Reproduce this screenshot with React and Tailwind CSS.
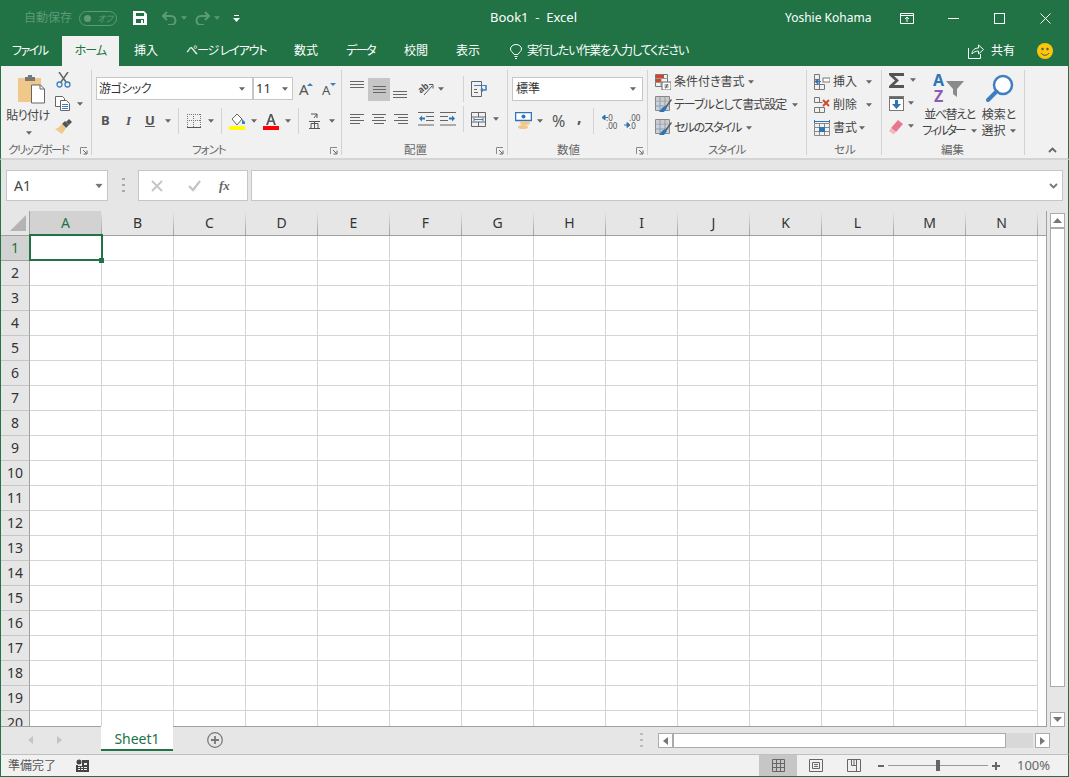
import React from "react";

const Caret = ({ className = "", c = "#666" }) => (
  <svg width="6" height="4" viewBox="0 0 7 4" className={"shrink-0 " + className}><path d="M0 0h7L3.5 4z" fill={c} /></svg>
);
const Sep = ({ className = "" }) => <div className={"w-px h-[26px] bg-[#d2d2d2] shrink-0 " + className} />;
const Launcher = ({ className = "" }) => (
  <svg width="8" height="8" viewBox="0 0 8 8" className={"shrink-0 " + className}>
    <path d="M.5 7V.5H7" fill="none" stroke="#8a8a8a" /><path d="M3 3l3.5 3.5M7 3.5V7H3.5" fill="none" stroke="#666" />
  </svg>
);
const Lines = ({ rows, className = "" }) => (
  <svg width="15" height="14" viewBox="0 0 15 14" className={"shrink-0 " + className}>
    {rows.map(([a, b, y], i) => <rect key={i} x={a} y={y} width={b - a} height="1" fill="#666" />)}
  </svg>
);
const Group = ({ w, label, lx, launcher, children, last }) => (
  <div className={"flex shrink-0 " + w}>
    <div className="flex-1 flex flex-col h-[88px] min-w-0">
      <div className="flex-1 min-h-0">{children}</div>
      <div className="flex items-center h-[14px] mb-[1px] text-[11.5px] text-[#666] leading-none">
        <span className={lx}>{label}</span>
        {launcher ? <Launcher className="ml-auto mr-[3px] mt-[2px]" /> : null}
      </div>
    </div>
    {last ? null : <div className="w-px h-[85px] bg-[#d2d2d2]" />}
  </div>
);

const Paste = () => (
  <svg width="29" height="30" viewBox="0 0 29 30">
    <path d="M1 4h23v24H1z" fill="#efc88a" />
    <path d="M8 3h3V1h4v2h3v4H8z" fill="#777" />
    <path d="M14.500 11h9l4 4v14h-13z" fill="#fff" stroke="#666" />
    <path d="M23 11v4h4" fill="none" stroke="#666" />
  </svg>
);
const Scissors = () => (
  <svg width="15" height="16" viewBox="0 0 15 16" fill="none">
    <path d="M3 0l7 10M12 0L5 10" stroke="#666" strokeWidth="1.500" />
    <circle cx="3.500" cy="12.500" r="2.500" stroke="#3f7fbf" strokeWidth="1.300" />
    <circle cx="11.500" cy="12.500" r="2.500" stroke="#3f7fbf" strokeWidth="1.300" />
  </svg>
);
const Copy = () => (
  <svg width="16" height="15" viewBox="0 0 16 15" fill="#fff">
    <path d="M.5.500h7l2 2v8h-9z" stroke="#666" />
    <path d="M5.500 4.500h6l3 3v7h-9z" stroke="#666" />
    <path d="M7 8.500h6M7 10.500h6M7 12.500h6" stroke="#3f7fbf" />
  </svg>
);
const Brush = () => (
  <svg width="17" height="16" viewBox="0 0 17 16">
    <path d="M10 2l4 4-3 3-4-4z" fill="#555" /><path d="M14 0l3 3-3 3-3-3z" fill="#555" />
    <path d="M7 5l4 4-4 6-7-5 3-1z" fill="#efc88a" />
  </svg>
);
const Grow = ({ up }) => (
  <svg width="14" height="14" viewBox="0 0 14 14" className="overflow-visible">
    <text x="0" y="13" fontSize={up ? 15 : 13} fill="#555" fontFamily="Noto Sans">A</text>
    <path d={up ? "M8 4l3-3 3 3z" : "M8 1h6l-3 3z"} fill="#3f7fbf" />
  </svg>
);
const Borders = () => (
  <svg width="14" height="14" viewBox="0 0 14 14" fill="none">
    <path d="M.5 0v13M6.500 0v13M13.500 0v13M0 .5h14M0 6.500h14" stroke="#777" strokeDasharray="1 1" /><path d="M0 13.500h14" stroke="#555" />
  </svg>
);
const Fill = () => (
  <svg width="17" height="17" viewBox="0 0 17 17">
    <path d="M3 6l5-5 5 5-5 6z" fill="#fff" stroke="#666" /><path d="M13 6l3 3v2h-3z" fill="#3f7fbf" />
    <rect y="13" width="16" height="4" fill="#ffff00" />
  </svg>
);
const FontColor = () => (
  <svg width="16" height="17" viewBox="0 0 16 17">
    <path d="M3 12L7 1h2l4 11h-2l-1-3H6l-1 3zM6.500 7.500h3L8 3z" fill="#555" fillRule="evenodd" />
    <rect y="13" width="16" height="4" fill="#ff0000" />
  </svg>
);
const Phonetic = () => (
  <svg width="13" height="16" viewBox="0 0 13 16" fill="none" stroke="#555">
    <path d="M3 1h6L6 5M9 1v4" /><path d="M1 8.500h11M3 10.500h7v5H3zM6.500 8v7.500M1 15.500h11" />
  </svg>
);
const Orient = () => (
  <svg width="16" height="16" viewBox="0 0 16 16" fill="none" className="overflow-visible">
    <text x="0" y="11" fontSize="9" fontWeight="700" fill="#555" fontFamily="Noto Sans" transform="rotate(-40 4 8)">ab</text>
    <path d="M6 14L14 5" stroke="#555" /><path d="M11 3.500h4v4" stroke="#555" />
  </svg>
);
const Wrap = () => (
  <svg width="16" height="16" viewBox="0 0 16 16" fill="none">
    <path d="M.5.500h10v15H.5z" stroke="#666" />
    <path d="M3 4.500h12" stroke="#3f7fbf" /><path d="M3 8.500h3M3 11.500h4" stroke="#666" />
    <path d="M15 4v5h-5" stroke="#3f7fbf" strokeWidth="1.500" /><path d="M12 7l-3 2 3 2z" fill="#3f7fbf" />
  </svg>
);
const Merge = () => (
  <svg width="15" height="15" viewBox="0 0 15 15" fill="none" stroke="#666">
    <path d="M.5.500h14v14H.5zM.5 5h14M.5 10h14M7.500 .5V5M7.500 10v4.500" />
    <path d="M3 7.500h9" stroke="#3f7fbf" /><path d="M3 6v3M12 6v3" stroke="#3f7fbf" />
  </svg>
);
const Outdent = ({ flip }) => (
  <svg width="16" height="14" viewBox="0 0 16 14" className={flip ? "-scale-x-100" : ""}>
    <path d="M0 .5h16M8 4.500h8M8 8.500h8M0 13h16" stroke="#666" />
    <path d="M1 6.500l3-3v2h3v2H4v2z" fill="#2f75b5" />
  </svg>
);
const Money = () => (
  <svg width="17" height="18" viewBox="0 0 17 18">
    <rect x=".5" y=".5" width="16" height="8" fill="#fff" stroke="#2f75b5" strokeWidth="1.500" />
    <circle cx="8.500" cy="4.500" r="2" fill="#2f75b5" />
    <ellipse cx="10" cy="11" rx="5" ry="2" fill="#efc88a" /><ellipse cx="8" cy="15" rx="5" ry="2" fill="#efc88a" />
  </svg>
);
const Dec = ({ more }) => (
  <svg width="16" height="15" viewBox="0 0 16 15" className="overflow-visible">
    <text x="5" y="6.500" fontSize="8" fill="#555" fontFamily="Noto Sans">{more ? ".00" : ".0"}</text>
    <text x="5" y="14.500" fontSize="8" fill="#555" fontFamily="Noto Sans">{more ? ".0" : ".00"}</text>
    {more ? <path d="M0 11h5M3 8.500l3 2.500-3 2.500z" stroke="#2f75b5" fill="#2f75b5" /> : <path d="M1 3.500h6M4 1L1 3.500 4 6z" stroke="#2f75b5" fill="#2f75b5" />}
  </svg>
);
const CondFmt = () => (
  <svg width="16" height="16" viewBox="0 0 16 16" fill="none">
    <path d="M.5.500h12v12H.5z" stroke="#777" /><path d="M.5 4.500h12M.5 8.500h12M6 .5v12" stroke="#999" />
    <rect x="1" y="1" width="8" height="3" fill="#d24726" /><rect x="1" y="5" width="5" height="3" fill="#d24726" />
    <rect x="7" y="8" width="9" height="8" fill="#fff" stroke="#666" /><path d="M9.500 11h4M9.500 13h4M12.500 10l-2 4.500" stroke="#444" strokeWidth=".8" />
  </svg>
);
const TableFmt = () => (
  <svg width="17" height="17" viewBox="0 0 17 17" fill="none">
    <path d="M.5.500h14v14H.5z" stroke="#888" /><rect x="1" y="1" width="13" height="3" fill="#ccc" />
    <rect x="1" y="5" width="13" height="9" fill="#c5d3e3" />
    <path d="M5 .5v14M10 .5v14M.5 5h14M.5 10h14" stroke="#999" />
    <path d="M10 11l6-8 1 1-6 8z" fill="#555" /><path d="M7 12l3-2 2 2-3 4H4z" fill="#2f75b5" />
  </svg>
);
const CellIns = () => (
  <svg width="16" height="16" viewBox="0 0 16 16" fill="none">
    <path d="M.5.500h5v5h-5zM.5 5.500h5v5h-5zM5.500 10.500v5h-5v-5M5.500 10.500h5v5h-5z" stroke="#777" />
    <rect x="9" y="4" width="7" height="4" fill="#fff" stroke="#777" /><path d="M1 7.500h6M4 5L1 7.500 4 10z" fill="#2f75b5" stroke="#2f75b5" />
  </svg>
);
const CellDel = () => (
  <svg width="16" height="16" viewBox="0 0 16 16" fill="none">
    <path d="M.5.500h5v5h-5zM.5 10.500h5v5h-5zM5.500 10.500h5v5h-5z" stroke="#777" /><path d="M.5 5.500h8" stroke="#777" />
    <path d="M9 3l6 6M15 3l-6 6" stroke="#d24726" strokeWidth="1.800" />
  </svg>
);
const CellFmt = () => (
  <svg width="16" height="16" viewBox="0 0 16 16" fill="none">
    <path d="M.5 0v3M15.500 0v3M1 1.500h14" stroke="#2f75b5" />
    <path d="M.5 3.500h15v12H.5zM.5 7.500h15M.5 11.500h15M5.500 3.500v12M10.500 3.500v12" stroke="#888" />
    <rect x="5" y="7" width="6" height="5" fill="#2f75b5" />
  </svg>
);
const Sigma = () => (
  <svg width="16" height="15" viewBox="0 0 16 15"><path d="M0 0h15v3H5l5 4.500L5 12h10v3H0v-2l6-5.500L0 2z" fill="#555" /></svg>
);
const FillDown = () => (
  <svg width="15" height="15" viewBox="0 0 15 15">
    <rect x=".5" y=".5" width="14" height="14" fill="#fff" stroke="#777" /><rect x="1" y="1" width="13" height="2" fill="#666" />
    <path d="M6 4h3v4h3l-4.500 5L3 8h3z" fill="#2f75b5" />
  </svg>
);
const Eraser = () => (
  <svg width="15" height="15" viewBox="0 0 15 15">
    <path d="M9 1l5 4-7 8-5-4z" fill="#e8798c" /><path d="M2 9l5 4-2 2H4l-4-3z" fill="#f3b6c0" />
  </svg>
);
const Sort = () => (
  <svg width="31" height="30" viewBox="0 0 31 30">
    <text x="0" y="13" fontSize="16" fontWeight="700" fill="#2f75b5" fontFamily="Noto Sans">A</text>
    <text x="1" y="29" fontSize="16" fontWeight="700" fill="#8e5bb5" fontFamily="Noto Sans">Z</text>
    <path d="M13 8h18l-7 8v8l-4-3v-5z" fill="#8a8a8a" />
  </svg>
);
const Magnifier = () => (
  <svg width="28" height="28" viewBox="0 0 28 28" fill="none">
    <circle cx="17" cy="11" r="9" fill="#fff" stroke="#3f7fbf" strokeWidth="2.500" />
    <path d="M10.500 17.500L2 26" stroke="#3f7fbf" strokeWidth="4" strokeLinecap="round" />
  </svg>
);

const Row = ({ className = "", children }) => <div className={"flex items-center " + className}>{children}</div>;

const COLS = ["A", "B", "C", "D", "E", "F", "G", "H", "I", "J", "K", "L", "M", "N"];
const ROWS = Array.from({ length: 20 }, (_, i) => i + 1);

export default function App() {
  return (
    <div className="w-[1069px] h-[777px] flex flex-col overflow-hidden bg-[#e6e6e6] text-[#444] font-['Noto_Sans','Noto_Sans_CJK_JP',sans-serif] [font-feature-settings:'palt']">
      {/* Title bar */}
      <div className="h-[36px] shrink-0 bg-[#217346] flex items-center text-white text-[12px]">
        <span className="ml-[24px] w-[48px] text-[#5e9a78] text-[12px] whitespace-nowrap">自動保存</span>
        <div className="ml-[7px] w-[38px] h-[15px] rounded-full border border-[#5e9a78] flex items-center text-[#5e9a78]">
          <div className="ml-[4px] w-[7px] h-[7px] rounded-full bg-[#5e9a78]" />
          <span className="ml-[6px] text-[9px] italic leading-none">オフ</span>
        </div>
        <svg className="ml-[16px]" width="14" height="14" viewBox="0 0 14 14">
          <path d="M0 0h11l3 3v11H0z" fill="#fff" /><path d="M3 2h8v3H3zM3 8h8v4H3z" fill="#217346" /><rect x="8" y="9" width="2" height="3" fill="#fff" />
        </svg>
        <svg className="ml-[15px]" width="15" height="14" viewBox="0 0 15 14" fill="none" stroke="#5e9a78" strokeWidth="2">
          <path d="M1 5h8a4.500 4.500 0 0 1 0 9H6" /><path d="M5 1L1 5l4 4" />
        </svg>
        <Caret className="ml-[4px]" c="#5e9a78" />
        <svg className="ml-[8px]" width="15" height="14" viewBox="0 0 15 14" fill="none" stroke="#5e9a78" strokeWidth="2">
          <path d="M14 5H6a4.500 4.500 0 0 0 0 9h3" /><path d="M10 1l4 4-4 4" />
        </svg>
        <Caret className="ml-[4px]" c="#5e9a78" />
        <svg className="ml-[13px]" width="7" height="7" viewBox="0 0 7 7" fill="#fff"><rect x="1" y="0" width="5" height="1" /><path d="M0 3h7L3.500 7z" /></svg>
        <span className="ml-[250px] w-[90px] text-[13px] whitespace-pre">Book1  -  Excel</span>
        <span className="ml-[205px] w-[90px] text-[12px] whitespace-nowrap">Yoshie Kohama</span>
        <svg className="ml-[25px]" width="14" height="11" viewBox="0 0 14 11" fill="none" stroke="#fff">
          <path d="M.5 .5h13v10H.5zM.5 2.500h13M7 9V4.500M5 6l2-2 2 2" />
        </svg>
        <div className="ml-[34px] w-[11px] h-px bg-white" />
        <div className="ml-[35px] w-[11px] h-[11px] border border-white" />
        <svg className="ml-[35px]" width="11" height="11" viewBox="0 0 11 11" stroke="#fff"><path d="M.5.500l10 10M10.500.5l-10 10" /></svg>
      </div>
      {/* Tabs */}
      <div className="h-[30px] shrink-0 bg-[#217346] flex items-center text-white text-[12px] whitespace-nowrap">
        <span className="ml-[12px] w-[35px] tracking-[-1.5px]">ファイル</span>
        <div className="ml-[15px] w-[57px] h-[30px] bg-[#f1f1f1] text-[#217346] flex items-center justify-center tracking-[-1px]">ホーム</div>
        <span className="ml-[15px] w-[24px]">挿入</span>
        <span className="ml-[28px] w-[80px] tracking-[-1.2px]">ページ レイアウト</span>
        <span className="ml-[28px] w-[24px]">数式</span>
        <span className="ml-[28px] w-[30px] tracking-[-1.5px]">データ</span>
        <span className="ml-[28px] w-[24px]">校閲</span>
        <span className="ml-[28px] w-[25px]">表示</span>
        <svg className="ml-[29px]" width="12" height="15" viewBox="0 0 12 15" fill="none" stroke="#fff">
          <path d="M4 10.500C3 8 .5 7.500 .5 5a5.500 4.500 0 0 1 11 0c0 2.500-2.500 3-3.500 5.500zM4.500 12.500h3M5 14.500h2" />
        </svg>
        <span className="ml-[5px] w-[161px] text-[12px] tracking-[-1.1px]">実行したい作業を入力してください</span>
        <svg className="ml-[280px]" width="16" height="15" viewBox="0 0 16 15" fill="none" stroke="#fff">
          <path d="M.5 4v10.500h12V10M4 10c0-4 3-6 6.500-6V1L15.500 5.500 10.500 10V7C8 7 5.500 8 4 10z" />
        </svg>
        <span className="ml-[7px] w-[24px]">共有</span>
        <svg className="ml-[22px]" width="16" height="16" viewBox="0 0 16 16">
          <circle cx="8" cy="8" r="8" fill="#fdc60a" /><circle cx="5.500" cy="6" r="1.200" fill="#555" /><circle cx="10.500" cy="6" r="1.200" fill="#555" />
          <path d="M4 10c2 3 6 3 8 0" fill="none" stroke="#555" />
        </svg>
      </div>
      {/* Ribbon */}
      <div className="h-[94px] shrink-0 bg-[#f1f1f1] border-x border-x-[#217346] border-b-2 border-b-[#d4d4d4] flex items-start pt-[4px] text-[12px] whitespace-nowrap">
        <Group w="w-[91px]" label="クリップボード" lx="ml-[7px] tracking-[-1.5px]" launcher>
          <div className="flex">
            <div className="w-[54px] flex flex-col items-center pt-[4px]">
              <div className="h-[30px] ml-[6px]"><Paste /></div>
              <span className="mt-[3px] leading-[18px] tracking-[-0.5px]">貼り付け</span>
              <Caret className="mt-[6px] ml-[2px]" />
            </div>
            <div className="flex flex-col items-start pt-[2px]">
              <div className="ml-[1px]"><Scissors /></div>
              <Row className="mt-[8px]"><Copy /><Caret className="ml-[6px]" /></Row>
              <div className="mt-[8px]"><Brush /></div>
            </div>
          </div>
        </Group>
        <Group w="w-[250px]" label="フォント" lx="ml-[100px] tracking-[-1px]" launcher>
          <Row className="mt-[7px] ml-[4px]">
            <div className="w-[157px] h-[23px] bg-white border border-[#c6c6c6] flex items-center pl-[2px] pr-[7px] text-[#333]">
              <span className="flex-1 tracking-[-0.5px]">游ゴシック</span><Caret />
            </div>
            <div className="w-[40px] h-[23px] bg-white border border-[#c6c6c6] flex items-center pl-[2px] pr-[4px] text-[#333]">
              <span className="flex-1 text-[13px]">11</span><Caret />
            </div>
            <div className="ml-[6px]"><Grow up /></div>
            <div className="ml-[9px]"><Grow /></div>
          </Row>
          <Row className="mt-[8px] h-[26px] ml-[9px] text-[#555] font-bold text-[13px]">
            <span className="w-[9px]">B</span>
            <span className="ml-[16px] w-[9px] italic font-['Liberation_Serif',serif]">I</span>
            <span className="ml-[10px] w-[10px] underline">U</span>
            <Caret className="ml-[10px]" />
            <Sep className="ml-[7px]" />
            <div className="ml-[8px]"><Borders /></div>
            <Caret className="ml-[7px]" />
            <Sep className="ml-[7px]" />
            <div className="ml-[7px]"><Fill /></div>
            <Caret className="ml-[5px]" />
            <div className="ml-[6px]"><FontColor /></div>
            <Caret className="ml-[6px]" />
            <Sep className="ml-[7px]" />
            <div className="ml-[9px]"><Phonetic /></div>
            <Caret className="ml-[8px]" />
          </Row>
        </Group>
        <Group w="w-[166px]" label="配置" lx="ml-[62px]" launcher>
          <Row className="ml-[8px] h-[24px] mt-[7px]">
            <Lines rows={[[0, 14, 3], [0, 14, 6], [0, 14, 9]]} className="-mt-[8px]" />
            <div className="ml-[3px] w-[22px] h-[23px] bg-[#c6c6c6] flex items-center justify-center">
              <Lines rows={[[1, 14, 4], [1, 14, 7], [1, 14, 10]]} />
            </div>
            <Lines rows={[[0, 14, 5], [0, 14, 8], [0, 14, 11]]} className="ml-[3px] mt-[8px]" />
            <div className="ml-[10px]"><Orient /></div>
            <Caret className="ml-[4px]" />
            <Sep className="ml-[19px]" />
            <div className="ml-[7px]"><Wrap /></div>
          </Row>
          <Row className="ml-[8px] h-[26px] mt-[5px]">
            <Lines rows={[[0, 14, 2], [0, 10, 5], [0, 14, 8], [0, 10, 11]]} />
            <Lines rows={[[0, 14, 2], [2, 12, 5], [0, 14, 8], [2, 12, 11]]} className="ml-[7px]" />
            <Lines rows={[[0, 14, 2], [4, 14, 5], [0, 14, 8], [4, 14, 11]]} className="ml-[7px]" />
            <div className="ml-[9px]"><Outdent /></div>
            <div className="ml-[6px]"><Outdent flip /></div>
            <Sep className="ml-[7px]" />
            <div className="ml-[7px]"><Merge /></div>
            <Caret className="ml-[7px]" />
          </Row>
        </Group>
        <Group w="w-[140px]" label="数値" lx="ml-[49px]" launcher>
          <div className="ml-[4px] mt-[7px] w-[131px] h-[24px] bg-white border border-[#c6c6c6] flex items-center pl-[3px] pr-[6px] text-[#333]">
            <span className="flex-1">標準</span><Caret />
          </div>
          <Row className="mt-[7px] ml-[7px] h-[26px]">
            <Money />
            <Caret className="ml-[5px]" />
            <span className="ml-[9px] text-[16px] text-[#555] w-[15px] leading-none">%</span>
            <span className="ml-[10px] w-[6px] text-[16px] font-bold text-[#555] leading-none -mt-[8px]">,</span>
            <Sep className="ml-[10px]" />
            <div className="ml-[7px]"><Dec /></div>
            <div className="ml-[7px]"><Dec more /></div>
          </Row>
        </Group>
        <Group w="w-[159px]" label="スタイル" lx="ml-[60px] tracking-[-1px]">
          <div className="flex flex-col pl-[7px] pt-[3px] gap-[6px]">
            <Row className="h-[17px]"><CondFmt /><span className="ml-[3px]">条件付き書式</span><Caret className="ml-[3px]" /></Row>
            <Row className="h-[17px]"><TableFmt /><span className="ml-[2px] tracking-[-1px]">テーブルとして書式設定</span><Caret className="ml-[6px]" /></Row>
            <Row className="h-[17px]"><TableFmt /><span className="ml-[2px] tracking-[-1.5px]">セルのスタイル</span><Caret className="ml-[5px]" /></Row>
          </div>
        </Group>
        <Group w="w-[75px]" label="セル" lx="ml-[27px]">
          <div className="flex flex-col pl-[7px] pt-[3px] gap-[6px]">
            <Row className="h-[17px]"><CellIns /><span className="ml-[3px]">挿入</span><Caret className="ml-[9px]" /></Row>
            <Row className="h-[17px]"><CellDel /><span className="ml-[3px]">削除</span><Caret className="ml-[9px]" /></Row>
            <Row className="h-[17px]"><CellFmt /><span className="ml-[3px]">書式</span><Caret className="ml-[2px]" /></Row>
          </div>
        </Group>
        <Group w="w-[143px]" label="編集" lx="ml-[59px]">
          <div className="flex">
            <div className="flex flex-col pl-[7px] pt-[2px] gap-[7px]">
              <Row className="h-[16px]"><Sigma /><Caret className="ml-[5px]" /></Row>
              <Row className="h-[16px]"><FillDown /><Caret className="ml-[4px]" /></Row>
              <Row className="h-[16px]"><Eraser /><Caret className="ml-[4px]" /></Row>
            </div>
            <div className="flex flex-col items-center w-[55px] ml-[6px] pt-[3px]">
              <div className="h-[30px] -ml-[2px]"><Sort /></div>
              <div className="mt-[4px] leading-[16px] text-center tracking-[-1.4px]">並べ替えと</div>
              <Row className="leading-[15px] tracking-[-2px]">フィルター<Caret className="ml-[6px]" /></Row>
            </div>
            <div className="flex flex-col items-center w-[44px] pt-[4px]">
              <div className="h-[28px] ml-[1px]"><Magnifier /></div>
              <div className="mt-[5px] leading-[16px]">検索と</div>
              <Row className="leading-[15px] -ml-[1px]">選択<Caret className="ml-[4px]" /></Row>
            </div>
          </div>
        </Group>
        <div className="flex-1 flex justify-end h-[85px] items-end pb-[2px] pr-[11px]">
          <svg width="9" height="6" viewBox="0 0 9 6" fill="none" stroke="#666" strokeWidth="1.800"><path d="M1 5l3.500-3.500L8 5" /></svg>
        </div>
      </div>
      {/* Formula bar */}
      <div className="h-[51px] shrink-0 bg-[#e6e6e6] border-x border-[#217346] flex items-start pt-[10px] pl-[5px]">
        <div className="w-[102px] h-[31px] bg-white border border-[#c6c6c6] flex items-center pl-[7px] pr-[3px] text-[14px] text-[#444]">
          <span className="flex-1">A1</span><Caret className="scale-125 mr-[2px]" c="#777" />
        </div>
        <div className="ml-[14px] w-[3px] h-[14px] mt-[8px] flex flex-col justify-between">
          <div className="h-[2px] bg-[#aaa]" /><div className="h-[2px] bg-[#aaa]" /><div className="h-[2px] bg-[#aaa]" />
        </div>
        <div className="ml-[13px] w-[110px] h-[31px] bg-white border border-[#c6c6c6] flex items-center">
          <svg className="ml-[12px]" width="12" height="12" viewBox="0 0 12 12" stroke="#c4c4c4" strokeWidth="1.800"><path d="M1 1l10 10M11 1L1 11" /></svg>
          <svg className="ml-[25px]" width="13" height="12" viewBox="0 0 13 12" fill="none" stroke="#c4c4c4" strokeWidth="2.200"><path d="M1 6l4 4 7-9" /></svg>
          <span className="ml-[18px] font-['Liberation_Serif',serif] italic font-bold text-[13px] text-[#666]">fx</span>
        </div>
        <div className="ml-[3px] w-[812px] h-[31px] bg-white border border-[#c6c6c6] flex items-center justify-end pr-[4px]">
          <svg width="9" height="6" viewBox="0 0 9 6" fill="none" stroke="#777" strokeWidth="1.800"><path d="M1 1l3.500 3.500L8 1" /></svg>
        </div>
      </div>
      {/* Sheet + v-scroll */}
      <div className="h-[516px] shrink-0 flex bg-[#e6e6e6] border-x border-[#217346]">
        <div className="w-[1046px] flex flex-col overflow-hidden bg-white border-r border-b border-[#a0a0a0]">
          <div className="h-[25px] shrink-0 flex bg-[#e6e6e6] border-b border-[#a0a0a0]">
            <div className="w-[29px] shrink-0 flex border-r border-[#a0a0a0]">
              <svg className="ml-[9px] mt-[4px]" width="16" height="16" viewBox="0 0 16 16"><path d="M16 0v16H0z" fill="#b4b4b4" /></svg>
            </div>
            {COLS.map((c, i) => (
              <div key={c} className={"w-[72px] shrink-0 flex " + (i === 0 ? "bg-[#d2d2d2] text-[#217346]" : "text-[#333]")}>
                <span className="flex-1 text-center text-[14px] leading-[24px]">{c}</span>
                <div className="w-px bg-linear-to-b from-[#e6e6e6] to-[#a0a0a0]" />
              </div>
            ))}
          </div>
          <div className="flex-1 min-h-0">
            {ROWS.map((r) => (
              <div key={r} className="h-[25px] flex">
                <div className={"w-[29px] shrink-0 text-center text-[14px] leading-[24px] border-r border-b " + (r === 1 ? "bg-[#d2d2d2] text-[#217346] border-[#a0a0a0]" : "bg-[#e6e6e6] text-[#333] border-[#c6c6c6] border-r-[#a0a0a0]")}>{r}</div>
                {COLS.map((c) => (
                  r === 1 && c === "A" ? (
                    <div key={c} className="relative z-10 w-[72px] shrink-0 border-r border-b border-[#d4d4d4]">
                      <div className="absolute -left-[1px] -top-[2px] w-[74px] h-[27px] border-2 border-[#217346]" />
                      <div className="absolute left-[69px] top-[22px] w-[5px] h-[5px] bg-[#217346]" />
                    </div>
                  ) : (
                    <div key={c} className="w-[72px] shrink-0 border-r border-b border-[#d4d4d4]" />
                  )
                ))}
              </div>
            ))}
          </div>
        </div>
        <div className="ml-[3px] w-[15px] flex flex-col">
          <div className="mt-[2px] h-[15px] bg-white border border-[#ababab] flex items-center justify-center"><svg width="9" height="5" viewBox="0 0 9 5"><path d="M0 5h9L4.500 0z" fill="#777" /></svg></div>
          <div className="h-[459px] bg-white border border-[#ababab]" />
          <div className="flex-1" />
          <div className="h-[15px] bg-white border border-[#ababab] flex items-center justify-center"><svg width="9" height="5" viewBox="0 0 9 5"><path d="M0 0h9L4.500 5z" fill="#777" /></svg></div>
        </div>
      </div>
      {/* Sheet tabs */}
      <div className="h-[28px] shrink-0 bg-[#e6e6e6] border-x border-[#217346] border-b border-b-[#c0c0c0] flex items-start">
        <svg className="ml-[27px] mt-[9px]" width="5" height="8" viewBox="0 0 5 8"><path d="M5 0v8L0 4z" fill="#c4c4c4" /></svg>
        <svg className="ml-[24px] mt-[9px]" width="5" height="8" viewBox="0 0 5 8"><path d="M0 0v8l5-4z" fill="#c4c4c4" /></svg>
        <div className="ml-[39px] w-[72px] h-[25px] -mt-[1px] pt-[1px] bg-white border-b-2 border-[#217346] text-[#217346] text-[14px] flex items-center justify-center">Sheet1</div>
        <svg className="ml-[34px] mt-[5px]" width="16" height="16" viewBox="0 0 16 16" fill="none" stroke="#777">
          <circle cx="8" cy="8" r="7.300" strokeWidth="1.200" /><path d="M8 4v8M4 8h8" strokeWidth="1.800" />
        </svg>
        <div className="ml-[417px] mt-[6px] w-[3px] h-[14px] flex flex-col justify-between">
          <div className="h-[2px] bg-[#bbb]" /><div className="h-[2px] bg-[#bbb]" /><div className="h-[2px] bg-[#bbb]" />
        </div>
        <div className="ml-[15px] mt-[6px] w-[15px] h-[15px] bg-white border border-[#ababab] flex items-center justify-center"><svg width="5" height="8" viewBox="0 0 5 8"><path d="M5 0v8L0 4z" fill="#777" /></svg></div>
        <div className="mt-[6px] w-[333px] h-[15px] bg-white border border-[#ababab]" />
        <div className="mt-[6px] w-[27px] h-[15px] bg-[#d8d8d8]" />
        <div className="ml-[2px] mt-[6px] w-[15px] h-[15px] bg-white border border-[#ababab] flex items-center justify-center"><svg width="5" height="8" viewBox="0 0 5 8"><path d="M0 0v8l5-4z" fill="#777" /></svg></div>
      </div>
      {/* Status bar */}
      <div className="flex-1 bg-[#f1f1f1] border-x border-b border-[#217346] flex items-center text-[12px] text-[#555] whitespace-nowrap">
        <span className="ml-[7px] w-[48px]">準備完了</span>
        <svg className="ml-[20px]" width="13" height="13" viewBox="0 0 13 13">
          <circle cx="3" cy="3" r="2.500" fill="#444" /><path d="M6 1h7v12H0V6h2v1h4z" fill="#444" />
          <path d="M2 8h2v1H2zM5 8h2v1H5zM8 8h3v1H8zM2 10h2v1H2zM5 10h2v1H5zM8 10h3v1H8zM8 4h3v2H8z" fill="#f1f1f1" />
        </svg>
        <div className="ml-[670px] w-[38px] h-[21px] bg-[#c6c6c6] flex items-center justify-center">
          <svg width="13" height="13" viewBox="0 0 13 13" fill="none" stroke="#666"><path d="M.5.500h12v12H.5zM4.500 .5v12M8.500 .5v12M.5 4.500h12M.5 8.500h12" /></svg>
        </div>
        <svg className="ml-[12px]" width="14" height="13" viewBox="0 0 14 13" fill="none" stroke="#666"><path d="M.5.500h13v12H.5zM3.500 3.500h7v6h-7zM5 5.500h4M5 7.500h4" /></svg>
        <svg className="ml-[24px]" width="14" height="13" viewBox="0 0 14 13" fill="none" stroke="#666"><path d="M.5.500h13v12H.5zM4.500 .5v6h5v-6M7 .5v6M9.500 6.500v6" /></svg>
        <div className="ml-[17px] w-[6px] h-[2px] bg-[#666]" />
        <div className="ml-[4px] w-[100px] h-px bg-[#999] flex items-center">
          <div className="ml-[48px] w-[4px] h-[11px] bg-[#666]" />
        </div>
        <svg className="ml-[4px]" width="8" height="8" viewBox="0 0 8 8"><path d="M3 0h2v3h3v2H5v3H3V5H0V3h3z" fill="#666" /></svg>
        <span className="ml-[17px] text-[13px] text-[#666]">100%</span>
      </div>
    </div>
  );
}
